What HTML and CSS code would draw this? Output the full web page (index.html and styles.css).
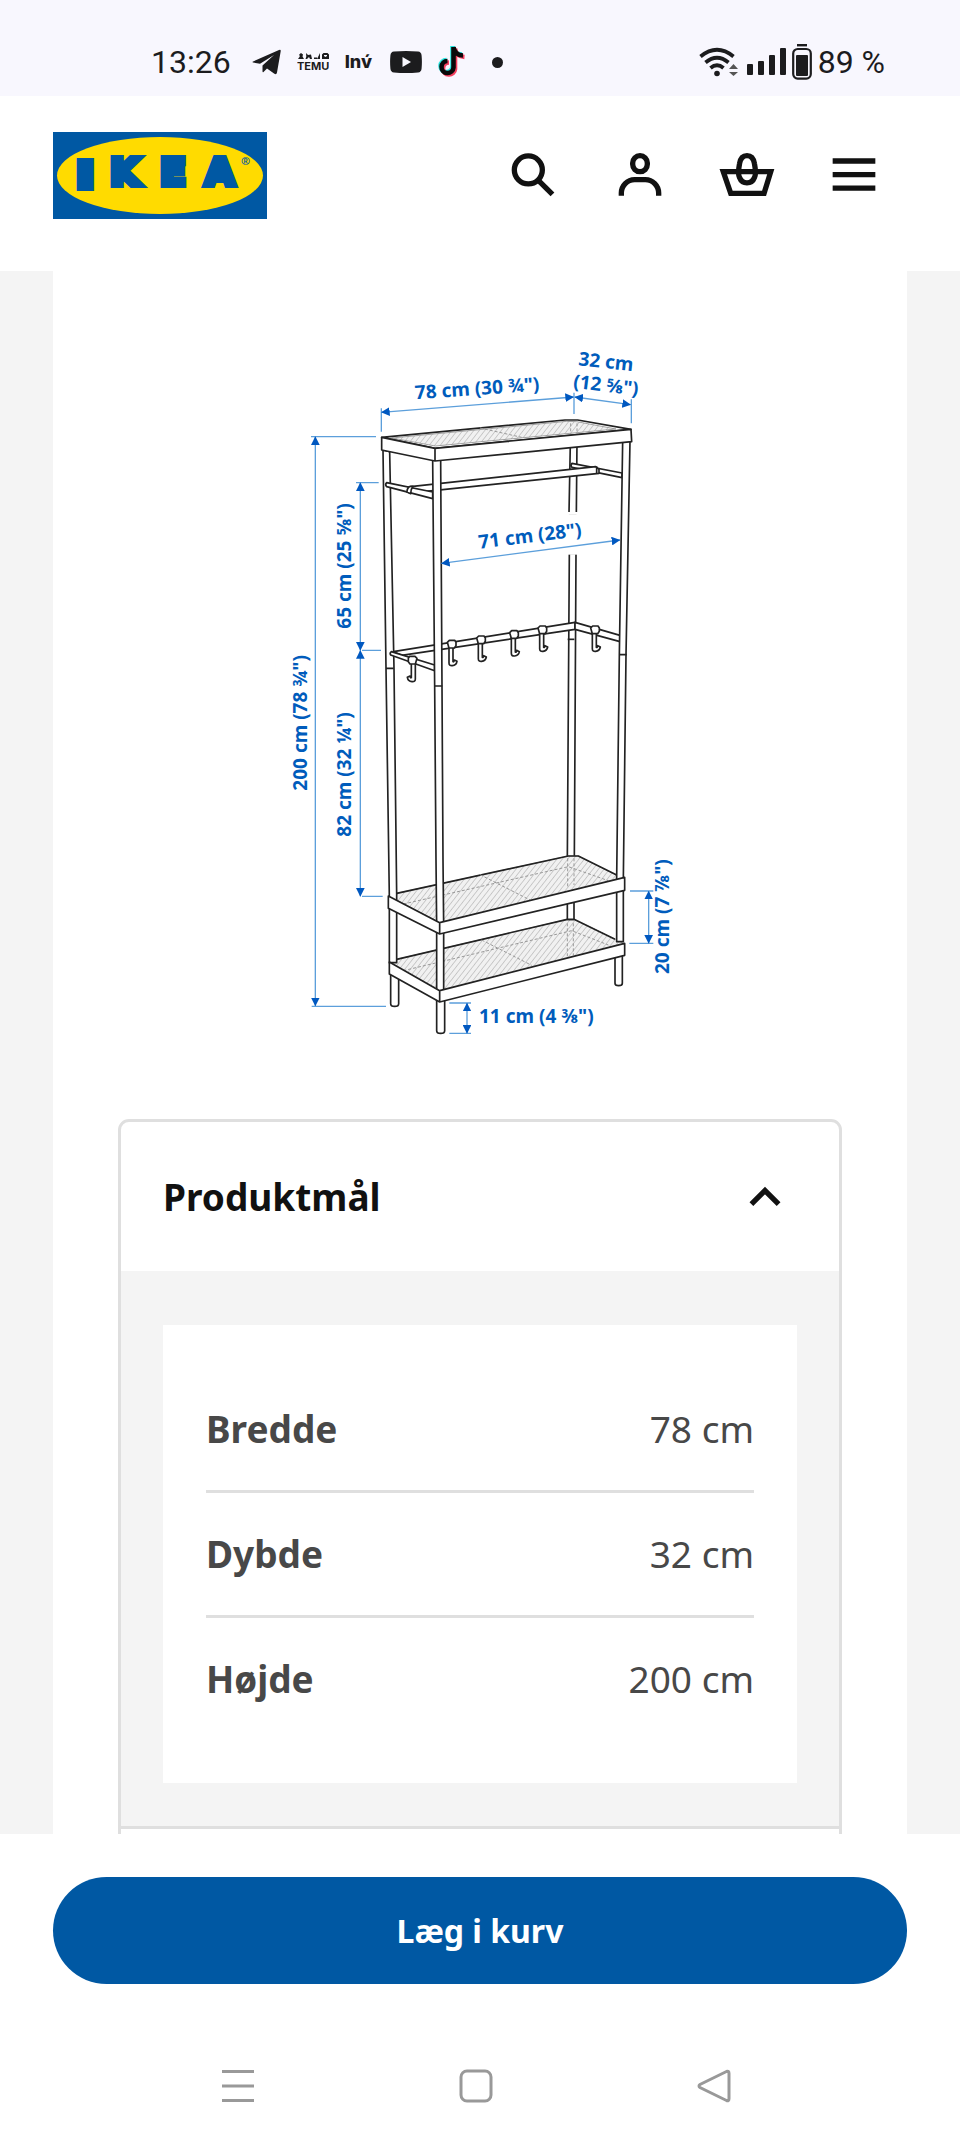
FILE: index.html
```html
<!DOCTYPE html>
<html lang="da">

<head>
    <meta charset="UTF-8">
    <meta name="viewport" content="width=device-width, initial-scale=1.0">
    <title>Produktmål - IKEA</title>
    <link rel="stylesheet" href="styles.css">
</head>

<body>
    <div class="status-bar">
        <div class="status-left">
            <span class="status-text clock">13:26</span>
            <svg width="29" height="28" viewBox="0 0 29 28" fill="#1c1c1e">
                <path d="M1 13.5 27 2q2-.8 1.700 1.200L25 24.500q-.5 2.500-2.600 1.200L15 20.500 11.500 24q-1 1-1-1v-5.500L22 7 8 15.800 1 14.500q-1-.4 0-1z"/>
            </svg>
            <svg width="32" height="24" viewBox="0 0 32 24" fill="#1c1c1e">
                <path d="M1 9h6L5.500 6.500 6 4.500 4 3 2.200 4.500l.6 2zM9 3l2 2 3-.5 1 4.500h-2l-1-2-2 2H8.500l.8-2.500zM17 7.500h3V9h-3zM20 9l3-6v6zM25 4.500l1.500-1.500h4L32 4.500V9h-7zm2 .5v1l1.500 1L30 6V5z" fill-rule="evenodd"/>
                <text class="temu-text" x="0" y="20">TEMU</text>
            </svg>
            <span class="inv-text">Inv́</span>
            <svg width="32" height="24" viewBox="0 0 32 24">
                <path d="M4 1.500Q16 .5 28 1.500q3.300.3 3.600 4 .6 6.500 0 13-.3 3.700-3.600 4-12 1-24 0-3.300-.3-3.600-4-.6-6.500 0-13 .3-3.700 3.600-4z" fill="#1c1c1e"/>
                <path d="M12.500 7v10l8.500-5z" fill="#f8f7fe"/>
            </svg>
            <svg width="28" height="32" viewBox="0 0 28 32" fill="none" stroke-width="4.600">
                <path d="M15.500 1v20.500a6 6 0 1 1-6-6.500M15.500 1q1 8 9.500 8.500" stroke="#25e6e0" transform="translate(-1 -1)"/>
                <path d="M15.500 1v20.500a6 6 0 1 1-6-6.500M15.500 1q1 8 9.500 8.500" stroke="#f4405f" transform="translate(1.500 1.500)"/>
                <path d="M15.500 1v20.500a6 6 0 1 1-6-6.500M15.500 1q1 8 9.500 8.500" stroke="#0a0a0a"/>
            </svg>
            <span class="dot"></span>
        </div>
        <div class="status-right">
            <svg width="42" height="32" viewBox="0 0 42 32" fill="none" stroke="#1c1c1e" stroke-width="3.800">
                <path d="M1.500 10.500q16.500-13.500 33 0M6.500 16.500q11.500-9.500 23 0M11.500 22q6.500-5.500 13 0"/>
                <circle cx="18" cy="27.500" r="2.800" fill="#1c1c1e" stroke="none"/>
                <path d="M34.500 18l4.500 5H30zM34.500 30l4.500-4H30z" fill="#555" stroke="none"/>
            </svg>
            <svg width="39" height="28" viewBox="0 0 39 28" fill="#1c1c1e">
                <rect x="0" y="16" width="6" height="11" rx="1"/>
                <rect x="11" y="13" width="6" height="14" rx="1"/>
                <rect x="22" y="7" width="6" height="20" rx="1"/>
                <rect x="33" y="0" width="6" height="27" rx="1"/>
            </svg>
            <svg width="20" height="36" viewBox="0 0 20 36">
                <path d="M5 1.200h10" stroke="#1c1c1e" stroke-width="2.400"/>
                <rect x="1.200" y="5" width="17.600" height="29.600" rx="4.500" fill="none" stroke="#1c1c1e" stroke-width="2.200"/>
                <rect x="4" y="11" width="12" height="21" rx="1" fill="#1c1c1e"/>
            </svg>
            <span class="status-text">89 %</span>
        </div>
    </div>

    <header class="header">
        <a class="logo" href="#" aria-label="IKEA">
            <svg width="214" height="87" viewBox="0 0 214 87">
                <rect width="214" height="87" fill="#0058a3"/>
                <ellipse cx="107" cy="43.500" rx="103" ry="38.500" fill="#ffdb00"/>
                <text class="logo-text" y="56"><tspan class="logo-stem" x="27" y="53">I</tspan><tspan x="57">K</tspan><tspan x="107">E</tspan><tspan x="152">A</tspan></text>
                <text class="logo-mark" x="188" y="33">®</text>
            </svg>
        </a>
        <nav class="header-icons">
            <button class="icon-button" aria-label="Søg">
                <svg class="icon" viewBox="0 0 24 24">
                    <circle cx="10.250" cy="10.100" r="5.250"/>
                    <path d="M14 14l5.300 5.300"/>
                </svg>
            </button>
            <button class="icon-button" aria-label="Profil">
                <svg class="icon" viewBox="0 0 24 24">
                    <rect x="9.250" y="4.750" width="5.500" height="6" rx="2.750"/>
                    <path d="M5 19.750v-1a5 5 0 0 1 5-5h4a5 5 0 0 1 5 5v1"/>
                </svg>
            </button>
            <button class="icon-button" aria-label="Indkøbskurv">
                <svg class="icon" viewBox="0 0 24 24">
                    <path d="M3.100 10.750h17.800L18.400 18.900H5.900z"/>
                    <path d="M12 4.750c1.700 0 2.500 1.200 2.800 3 .5 2.600.4 4.400 0 5.200-.5 1.300-1.400 2-2.800 2s-2.300-.7-2.800-2c-.4-.8-.5-2.600 0-5.200.3-1.800 1.100-3 2.800-3z"/>
                </svg>
            </button>
            <button class="icon-button" aria-label="Menu">
                <svg class="icon" viewBox="0 0 24 24">
                    <path d="M4 6.750h16M4 11.850h16M4 16.900h16"/>
                </svg>
            </button>
        </nav>
    </header>

    <main class="content">
        <div class="sheet">
            <figure class="drawing">
                <svg width="400" height="700" viewBox="0 0 1200 2100" role="img" aria-label="Produktmål">
                    <defs>
                        <pattern id="mesh" width="13" height="13" patternUnits="userSpaceOnUse" patternTransform="rotate(38)">
                            <rect width="13" height="13" fill="#f1f1f1"/>
                            <path d="M0 0v13" stroke="#c4c4c4" stroke-width="5"/>
                        </pattern>
                        <marker id="arrow" markerUnits="userSpaceOnUse" markerWidth="26" markerHeight="26" refX="25" refY="13" orient="auto-start-reverse">
                            <path d="M0 0l26 13L0 26z" fill="#0058c0"/>
                        </marker>
                        <g id="hook" class="hook">
                            <path d="M-8 6v48q0 9 10 8 12-1 14-13l-8-4q-1 7-4 5V6z"/>
                            <path d="M-13-8l6-6H9l4 6v10l-5 7H-8z"/>
                        </g>
                    </defs>

                    <!-- top shelf surface and back post -->
                    <g class="steel">
                        <path d="M305 292l550-52h38l160 28-588 57z"/>
                        <path class="mesh" d="M335 294l525-50 30 1 118 22-542 51z"/>
                        <path class="hidden" d="M600 264l125 28M872 250v32M891 250v32"/>
                        <path class="fill" d="M871 310l-4 210h22l2-215z"/>
                        <path class="fill" d="M868 640l-6 910 21 2 5-912z"/>
                    </g>
                    <path class="gap" d="M860 520h35"/>
                    <path class="gap" d="M860 640h35"/>

                    <!-- clothes rail -->
                    <g class="steel">
                        <path d="M876 370l150 29v14l-150-31q-6-6 0-12z"/>
                        <path d="M392 440l555-60 10 8v12l-555 58z"/>
                        <path d="M950 379v23"/>
                    </g>

                    <!-- hook rail -->
                    <g class="steel">
                        <path d="M340 935l545-88v21L365 946z"/>
                        <path d="M885 847l135 39v19l-135-37z"/>
                        <path d="M863 898h20"/>
                        <use href="#hook" x="515" y="915"/>
                        <use href="#hook" x="603" y="902"/>
                        <use href="#hook" x="702" y="886"/>
                        <use href="#hook" x="787" y="872"/>
                        <use href="#hook" x="945" y="872"/>
                    </g>

                    <!-- lower shelf surfaces -->
                    <g class="steel">
                        <path class="mesh" d="M350 1858l512-120h20l125 60 27 14-555 140-149-82z"/>
                        <path class="edge" d="M350 1858l512-120h20l123 60"/>
                        <path class="hidden" d="M370 1892l505-120 110 43M605 1800l150 76M862 1750v100M880 1750v96"/>
                        <path class="fill" d="M862 1690v48h20v-52z"/>
                        <path class="mesh" d="M350 1660l515-112h30l115 57 24 10-555 133-149-78z"/>
                        <path class="edge" d="M350 1660l515-112h30l115 57"/>
                        <path class="hidden" d="M370 1692l495-112 120 42M600 1604l150 76M863 1555v85M882 1555v80"/>
                    </g>

                    <!-- side and front posts -->
                    <g class="steel">
                        <path class="fill" d="M309 330l9 655 10 685v198h22v-205l-8-678-13-650z"/>
                        <path class="fill" d="M1028 305l-10 640-8 670v190h20v-190l8-670 12-642z"/>
                        <path d="M320 428l138 28v20l-138-36q-6-6 0-12z"/>
                        <path d="M381 456q0-14 10-17h8q-7 8-7 22z"/>
                        <path d="M334 935l130 40v17l-132-47q-4-6 2-10z"/>
                        <use href="#hook" transform="matrix(-1 0 0 1 398 963)"/>
                        <path class="fill" d="M458 360l6 680 4 520 2 195v205h21v-205l-2-195-3-520-4-680z"/>
                        <path d="M318 985h23M464 1038h23M1018 944h22"/>
                        <path d="M332 1905v86q0 8 12 8t12-8v-86M470 1980v92q0 8 12 8t12-8v-92M1005 1850v80q0 7 11 7t11-7v-88"/>
                    </g>

                    <!-- shelf rims -->
                    <g class="steel">
                        <path d="M305 292l160 33v38l-160-33zM465 325l588-57 2 37-590 58z"/>
                        <path d="M325 1668l154 80v34l-154-77zM479 1748l555-136v39l-555 131z"/>
                        <path d="M328 1866l151 86v34l-151-84zM479 1952l555-142v36l-555 140z"/>
                    </g>

                    <!-- measurement lines -->
                    <g class="guide">
                        <path d="M304 205v70M882 158v64M1054 178v72M93 290h195M228 428h68M246 931h57M95 1999h223M246 1669h62M1050 1653h70M1048 1810h72M508 1989h65M508 2080h65"/>
                    </g>
                    <g class="measure">
                        <path d="M304 217l577-46"/>
                        <path d="M884 171l168 23"/>
                        <path d="M106 290v1708"/>
                        <path d="M241 428v503"/>
                        <path d="M241 931v738"/>
                        <path d="M484 670l536-70"/>
                        <path d="M1106 1653v157"/>
                        <path d="M561 1989v91"/>
                    </g>
                    <g class="size">
                        <text transform="translate(406 178) rotate(-4)">78 cm (30 ¾")</text>
                        <text transform="translate(894 76) rotate(6)">32 cm</text>
                        <text transform="translate(878 143) rotate(7)">(12 ⅝")</text>
                        <text transform="translate(598 626) rotate(-7)">71 cm (28")</text>
                        <text transform="translate(214 866) rotate(-90)">65 cm (25 ⅝")</text>
                        <text transform="translate(80 1352) rotate(-90)">200 cm (78 ¾")</text>
                        <text transform="translate(214 1490) rotate(-90)">82 cm (32 ¼")</text>
                        <text transform="translate(1167 1902) rotate(-90)">20 cm (7 ⅞")</text>
                        <text x="597" y="2050">11 cm (4 ⅜")</text>
                    </g>
                </svg>
            </figure>

            <section class="accordion">
                <h2 class="accordion-heading">
                    <button class="accordion-button" aria-expanded="true" aria-controls="measurements">
                        Produktmål
                        <svg class="icon" viewBox="0 0 24 24">
                            <path d="M6.900 14.700l5.100-5.100 5.100 5.100"/>
                        </svg>
                    </button>
                </h2>
                <div class="accordion-panel" id="measurements">
                    <div class="measurement-box">
                        <table class="measurements">
                            <tr>
                                <th scope="row">Bredde</th>
                                <td>78 cm</td>
                            </tr>
                            <tr>
                                <th scope="row">Dybde</th>
                                <td>32 cm</td>
                            </tr>
                            <tr>
                                <th scope="row">Højde</th>
                                <td>200 cm</td>
                            </tr>
                        </table>
                    </div>
                </div>
                <div class="accordion-next"></div>
            </section>
        </div>
    </main>

    <div class="buy-bar">
        <button class="buy-button">Læg i kurv</button>
    </div>

    <nav class="system-nav">
        <button class="nav-button" aria-label="Seneste">
            <svg class="nav-icon" viewBox="0 0 34 34"><path d="M1 2.500h32M1 17h32M1 31.500h32"/></svg>
        </button>
        <button class="nav-button" aria-label="Hjem">
            <svg class="nav-icon" viewBox="0 0 34 34"><rect x="2" y="2" width="30" height="30" rx="6"/></svg>
        </button>
        <button class="nav-button" aria-label="Tilbage">
            <svg class="nav-icon" viewBox="0 0 34 34"><path d="M29.500 2.500 3 15.500q-2 1.500 0 3l26.500 13q2.500 1 2.500-2V4.500q0-3-2.500-2z"/></svg>
        </button>
    </nav>
</body>

</html>
```

FILE: styles.css
```css
* {
    box-sizing: border-box;
}

body {
    display: flex;
    flex-direction: column;
    height: 100vh;
    margin: 0;
    background: #fff;
    color: #111;
    font-family: "Noto Sans", sans-serif;
}

button {
    padding: 0;
    border: 0;
    background: none;
    color: inherit;
    font: inherit;
    cursor: pointer;
}

svg {
    display: block;
    flex-shrink: 0;
}

/* Phone status bar */
.status-bar {
    display: flex;
    justify-content: space-between;
    align-items: center;
    height: 96px;
    padding: 28px 75px 0 151px;
    background: #f8f7fe;
    color: #1c1c1e;
}

.status-left {
    display: flex;
    align-items: center;
    gap: 16px;
}

.status-right {
    display: flex;
    align-items: center;
    gap: 6px;
}

.status-text {
    font-family: Roboto, sans-serif;
    font-size: 32px;
    line-height: 36px;
}

.clock {
    margin-right: 5px;
}

.temu-text {
    font: 700 11px Inter, sans-serif;
}

.inv-text {
    width: 29px;
    font: 800 18px/24px Inter, sans-serif;
}

.dot {
    width: 11px;
    height: 11px;
    margin-left: 10px;
    border-radius: 50%;
    background: #1c1c1e;
}

/* Site header */
.header {
    display: flex;
    justify-content: space-between;
    align-items: center;
    height: 175px;
    padding: 0 53px 17px;
}

.logo-text {
    fill: #0058a3;
    stroke: #0058a3;
    stroke-width: 6px;
    font: 700 38px "DejaVu Sans", sans-serif;
}

.logo-stem {
    stroke-width: 12px;
    font-size: 28px;
}

.logo-mark {
    fill: #0058a3;
    font: 700 11px "Noto Sans", sans-serif;
}

.header-icons {
    display: flex;
}

.icon-button {
    display: flex;
    justify-content: center;
    align-items: center;
    width: 107px;
    height: 107px;
}

.icon {
    width: 64px;
    height: 64px;
    fill: none;
    stroke: #111;
    stroke-width: 2;
}

.content {
    flex: 1;
    min-height: 0;
    padding: 0 53px;
    overflow: hidden;
    background: #f4f4f4;
}

.sheet {
    padding: 69px 65px;
    background: #fff;
}

.drawing {
    display: flex;
    justify-content: center;
    margin: 0 0 79px;
}

.steel path,
.hook path {
    fill: #fff;
    stroke: #222;
    stroke-width: 5;
    stroke-linejoin: round;
}

.steel .mesh {
    fill: url(#mesh);
    stroke: #777;
    stroke-width: 2;
}

.steel .hidden {
    fill: none;
    stroke: #999;
    stroke-width: 3;
    stroke-dasharray: 9 6;
}

.steel .edge {
    fill: none;
}

.gap {
    stroke: #fff;
    stroke-width: 8;
}

.guide path,
.measure path {
    fill: none;
    stroke: #5c9fdb;
    stroke-width: 4;
}

.measure path {
    marker-start: url(#arrow);
    marker-end: url(#arrow);
}

.size text {
    fill: #005cbc;
    font-size: 57px;
    font-weight: 700;
}

/* Accordion with measurements */
.accordion {
    border: 3px solid #dfdfdf;
    border-radius: 11px;
}

.accordion-heading {
    margin: 0;
    font-size: 37px;
    line-height: 50px;
}

.accordion-button {
    display: flex;
    justify-content: space-between;
    align-items: center;
    width: 100%;
    height: 149px;
    padding: 0 42px;
}

.accordion-panel {
    padding: 54px 42px 43px;
    background: #f4f4f4;
}

.measurement-box {
    padding: 43px;
    background: #fff;
}

.measurements {
    width: 100%;
    border-collapse: collapse;
    color: #484848;
    font-size: 37px;
    line-height: 50px;
}

.measurements th,
.measurements td {
    padding: 36px 0;
    text-align: left;
}

.measurements td {
    text-align: right;
}

.measurements tr + tr {
    border-top: 3px solid #dfdfdf;
}

.accordion-next {
    height: 150px;
    border-top: 3px solid #dfdfdf;
}

/* Sticky add to cart */
.buy-bar {
    padding: 43px 53px;
}

.buy-button {
    display: block;
    width: 100%;
    height: 107px;
    border-radius: 54px;
    background: #0058a3;
    color: #fff;
    font-size: 32px;
    font-weight: 700;
}

/* Phone navigation */
.system-nav {
    display: grid;
    grid-template-columns: repeat(3, 1fr);
    height: 117px;
    padding: 0 127px 0 119px;
}

.nav-button {
    display: flex;
    justify-content: center;
    align-items: center;
}

.nav-icon {
    width: 34px;
    height: 34px;
    fill: none;
    stroke: #999;
    stroke-width: 3;
}
```
